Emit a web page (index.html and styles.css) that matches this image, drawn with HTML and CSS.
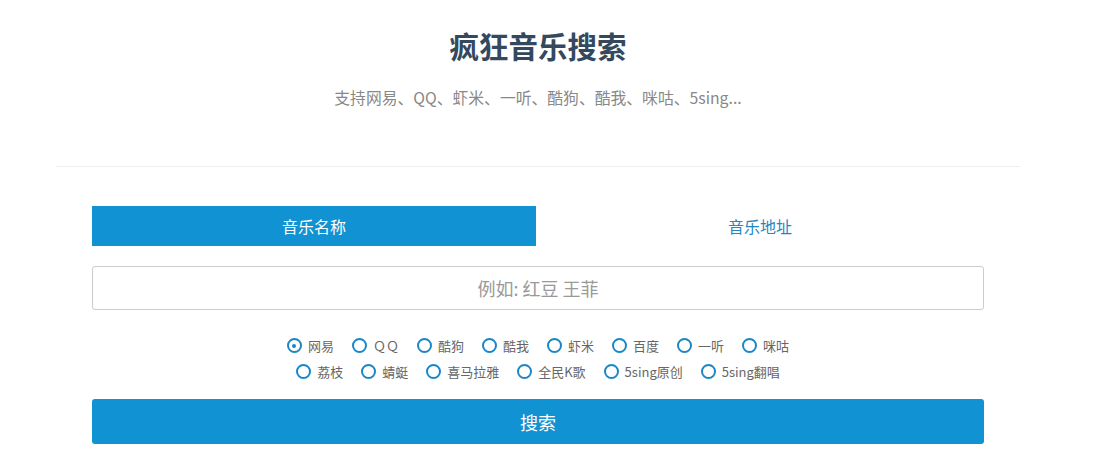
FILE: index.html
```html
<!DOCTYPE html>
<html lang="zh-CN">
<head>
  <meta charset="UTF-8">
  <meta name="viewport" content="width=device-width, initial-scale=1.0">
  <title>疯狂音乐搜索</title>
  <link rel="stylesheet" href="styles.css">
</head>
<body>
  <div class="page">
    <div class="container">
      <div class="header">
        <h1>疯狂音乐搜索</h1>
        <p>支持网易、QQ、虾米、一听、酷狗、酷我、咪咕、5sing...</p>
      </div>
      <hr>

      <div class="search">
        <div class="tabs">
          <a class="tab active">音乐名称</a>
          <a class="tab">音乐地址</a>
        </div>

        <input class="keyword" type="text" placeholder="例如: 红豆 王菲">

        <div class="types">
          <div class="type-row">
            <label><input type="radio" name="type" checked><span>网易</span></label>
            <label><input type="radio" name="type"><span>ＱＱ</span></label>
            <label><input type="radio" name="type"><span>酷狗</span></label>
            <label><input type="radio" name="type"><span>酷我</span></label>
            <label><input type="radio" name="type"><span>虾米</span></label>
            <label><input type="radio" name="type"><span>百度</span></label>
            <label><input type="radio" name="type"><span>一听</span></label>
            <label><input type="radio" name="type"><span>咪咕</span></label>
          </div>
          <div class="type-row">
            <label><input type="radio" name="type"><span>荔枝</span></label>
            <label><input type="radio" name="type"><span>蜻蜓</span></label>
            <label><input type="radio" name="type"><span>喜马拉雅</span></label>
            <label><input type="radio" name="type"><span>全民K歌</span></label>
            <label><input type="radio" name="type"><span>5sing原创</span></label>
            <label><input type="radio" name="type"><span>5sing翻唱</span></label>
          </div>
        </div>

        <button class="submit">搜索</button>
      </div>
    </div>
  </div>
</body>
</html>
```

FILE: styles.css
```css
body {
  margin: 0;
  padding: 0;
  background: #fff;
  font-family: "Noto Sans CJK SC", "Open Sans", sans-serif;
  color: #666;
}
.page {
  width: 1076px;
}
.container {
  width: 964px;
  margin: 0 auto;
}
.header {
  text-align: center;
}
.header h1 {
  margin: 25px 0 0;
  font-size: 29.5px;
  line-height: 40px;
  font-weight: bold;
  color: #34495e;
}
.header p {
  margin: 23px 0 0;
  font-size: 15.8px;
  line-height: 20px;
  color: #888;
}
hr {
  margin: 58px 0 0;
  border: 0;
  border-top: 1px solid #eee;
}
.search {
  width: 892px;
  margin: 39px auto 0;
}
.tabs {
  display: flex;
}
.tab {
  flex: 1;
  height: 40px;
  line-height: 40px;
  text-align: center;
  font-size: 16px;
  color: #1e87c4;
  cursor: pointer;
}
.tab.active {
  flex: 0 0 444px;
  background: #1192d2;
  color: #fff;
}
.keyword {
  display: block;
  box-sizing: border-box;
  width: 100%;
  height: 44px;
  margin-top: 20px;
  border: 1px solid #ccc;
  border-radius: 3px;
  font-family: inherit;
  font-size: 18px;
  text-align: center;
  color: #555;
  outline: none;
}
.keyword::placeholder {
  color: #999;
}
.types {
  margin-top: 22px;
}
.type-row {
  display: flex;
  justify-content: center;
  gap: 18px;
  height: 26px;
  align-items: center;
}
.type-row label {
  display: flex;
  align-items: center;
  gap: 6px;
  font-size: 13px;
  color: #666;
  cursor: pointer;
}
.type-row input {
  appearance: none;
  box-sizing: border-box;
  width: 15px;
  height: 15px;
  margin: 1px 0 0;
  border: 2px solid #1b86c6;
  border-radius: 50%;
  position: relative;
}
.type-row input:checked::after {
  content: "";
  position: absolute;
  left: 3.5px;
  top: 3.5px;
  width: 4px;
  height: 4px;
  border-radius: 50%;
  background: #1b86c6;
}
.submit {
  display: block;
  width: 100%;
  height: 45px;
  margin-top: 15px;
  border: none;
  border-radius: 3px;
  background: #1192d2;
  color: #fff;
  font-family: inherit;
  font-size: 18px;
  cursor: pointer;
}
```
